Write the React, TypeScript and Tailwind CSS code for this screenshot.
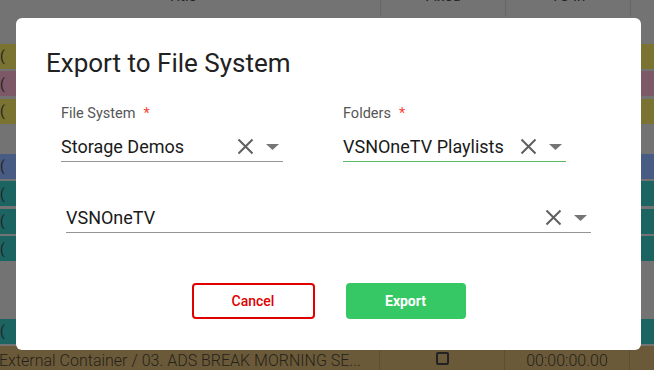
import React from 'react';

const rows = [
  { id: 1, color: '' },
  { id: 2, color: 'bg-[#7a7332]' },
  { id: 3, color: 'bg-[#7d5867]' },
  { id: 4, color: 'bg-[#7a7332]' },
  { id: 5, color: '' },
  { id: 6, color: 'bg-[#485b82]' },
  { id: 7, color: 'bg-[#1c6462]' },
  { id: 8, color: 'bg-[#1c6462]' },
  { id: 9, color: 'bg-[#1c6462]' },
  { id: 10, color: '' },
  { id: 11, color: '' },
  { id: 12, color: 'bg-[#1c6462]' },
];

function ClearIcon() {
  return (
    <svg width="17" height="17" viewBox="0 0 17 17" className="shrink-0">
      <path d="M1.5 1.5 15.5 15.5M15.5 1.5 1.5 15.5" stroke="#5f5f5f" strokeWidth="2" />
    </svg>
  );
}

function DropIcon() {
  return (
    <svg width="13" height="6" viewBox="0 0 13 6" className="ml-[12px] shrink-0">
      <path d="M0 0h13L6.5 6z" fill="#757575" />
    </svg>
  );
}

function SelectField({ label, value, focused }: { label?: string; value: string; focused?: boolean }) {
  return (
    <div>
      {label && (
        <div className="mb-[8px] flex items-start text-[14.5px] leading-[20px] text-[#555]">
          <span>{label}</span>
          <span className="ml-[8px] text-[#f44336]">*</span>
        </div>
      )}
      <div className={`flex h-[30px] items-center border-b pr-[4px] ${focused ? 'border-[#5cb867]' : 'border-[#949494]'}`}>
        <span className="flex-1 text-[18px] leading-[28px] text-[#1a1a1a]">{value}</span>
        <ClearIcon />
        <DropIcon />
      </div>
    </div>
  );
}

export default function App() {
  return (
    <div className="relative h-[370px] w-full overflow-hidden bg-[#737373] font-['Roboto',sans-serif]">
      {/* table behind the modal */}
      <div className="-mt-[24px] flex h-[40px] items-center text-[15px] text-[#222]">
        <div className="h-full w-[381px] border-r border-[#666] pr-[16px] flex items-center justify-center">Title</div>
        <div className="h-full w-[125px] border-r border-[#666] flex items-center justify-center">Fixed</div>
        <div className="h-full w-[125px] border-r border-[#666] flex items-center justify-center">TC In</div>
      </div>
      <div className="flex flex-col gap-[2.5px]">
        {rows.map(r => (
          <div key={r.id} className={`h-[25px] ${r.color} flex items-center text-[14px] text-[#222]`}>
            {r.color && <span className="leading-none">(</span>}
          </div>
        ))}
        <div className="flex h-[25px] bg-[#6a5a3a] text-[16px] font-light text-[#262219]">
          <div className="w-[381px] shrink-0 overflow-hidden whitespace-nowrap border-r border-[#5c4f33] pt-[3px] -ml-[1px]">
            External Container / 03. ADS BREAK MORNING SE...
          </div>
          <div className="flex w-[125px] shrink-0 justify-center border-r border-[#5c4f33] pt-[6px]">
            <div className="h-[13px] w-[13px] rounded-[2px] border-2 border-[#222]" />
          </div>
          <div className="w-[125px] shrink-0 border-r border-[#5c4f33] pt-[3px] text-center">00:00:00.00</div>
        </div>
      </div>

      {/* modal */}
      <div className="absolute left-[16px] top-[18px] h-[332px] w-[625px] rounded-[6px] bg-white pt-[29px]">
        <h2 className="pl-[30px] text-[26px] leading-[32px] text-[#212121]">Export to File System</h2>
        <div className="ml-[45px] mt-[25px] grid grid-cols-[222px_223px] gap-x-[60px]">
          <SelectField label="File System" value="Storage Demos" />
          <SelectField label="Folders" value="VSNOneTV Playlists" focused />
        </div>
        <div className="ml-[50px] mt-[41px] w-[525px]">
          <SelectField value="VSNOneTV" />
        </div>
        <div className="mt-[50px] flex justify-center gap-[31px]">
          <button className="h-[36px] w-[123px] rounded-[4px] border-2 border-[#e00000] text-[14px] font-medium text-[#e00000]">
            Cancel
          </button>
          <button className="h-[36px] w-[120px] rounded-[4px] bg-[#37c866] text-[14px] font-bold text-white">
            Export
          </button>
        </div>
      </div>
    </div>
  );
}
